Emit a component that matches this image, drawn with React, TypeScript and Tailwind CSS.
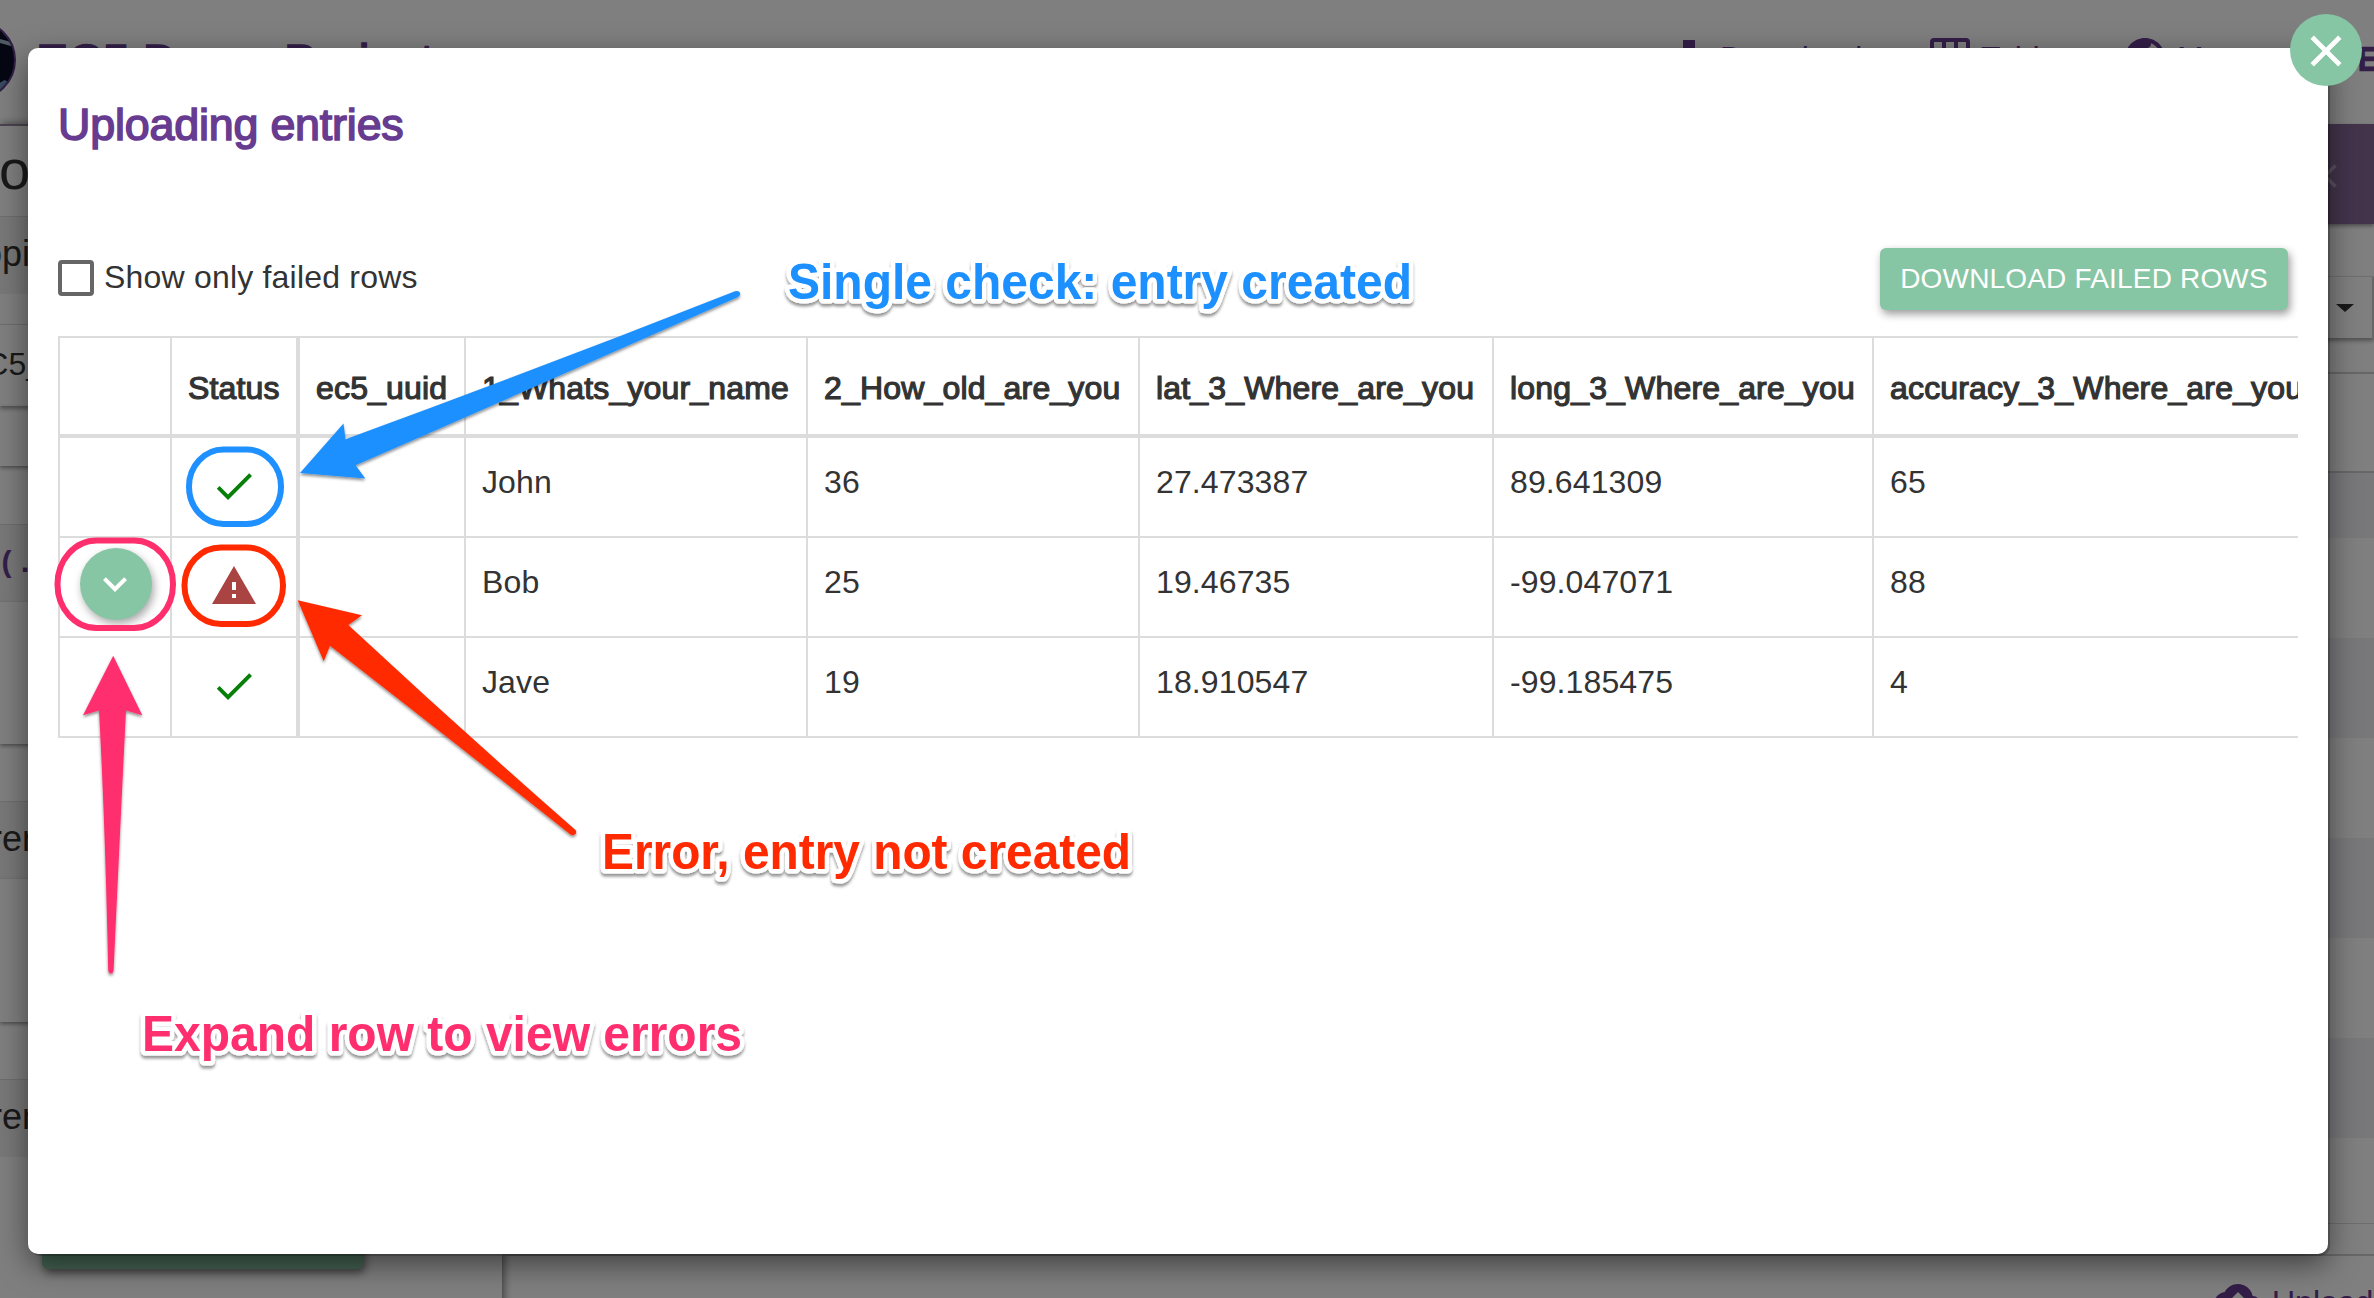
import React from "react";

const FONT = "font-['Liberation_Sans',Arial,sans-serif]";

function SidePanelTitle({ children, className }: { children: React.ReactNode; className: string }) {
  return (
    <div className="h-[78px] shrink-0 border-t border-[#dcdcdc] bg-[#f0f0f0]">
      <div className={`whitespace-nowrap ${className}`}>{children}</div>
    </div>
  );
}

function Backdrop() {
  return (
    <div className="flex h-[1298px] w-[2374px] flex-col overflow-hidden bg-white text-[#333]">
      <header className="flex h-[124px] shrink-0 items-start text-[32px] leading-[36px] text-[#673c90]">
        <div className="mt-[20px] -ml-[64px] h-[80px] w-[80px] shrink-0 overflow-hidden rounded-full border-2 border-[#673c90] bg-[#0a0f24]">
          <svg viewBox="0 0 80 80" className="h-full w-full">
            <path d="M50 16l30 8" stroke="#9fb4c4" strokeWidth="4" />
            <path d="M56 70l14-9 6 3-10 16z" fill="#6f93c0" />
          </svg>
        </div>
        <div className="mt-[34px] ml-[20px] text-[48px] leading-[55px] whitespace-nowrap [-webkit-text-stroke:1.6px_#673c90]">
          EC5 Demo Project
        </div>
        <div className="flex-1" />
        <div className="flex w-[709px] shrink-0 items-start">
          <svg viewBox="0 0 24 24" className="mt-[34px] h-[48px] w-[48px] shrink-0" fill="#673c90">
            <path d="M19 9h-4V3H9v6H5l7 7 7-7zM5 18v2h14v-2H5z" />
          </svg>
          <span className="mt-[40px] ml-[7px] w-[210px] shrink-0">Download</span>
          <svg viewBox="0 0 40 40" className="mt-[38px] h-[40px] w-[40px] shrink-0" fill="none" stroke="#673c90" strokeWidth="4">
            <rect x="2" y="2" width="36" height="36" rx="2" />
            <path d="M14 2v36M26 2v36M2 14h36M2 26h36" />
          </svg>
          <span className="mt-[40px] ml-[11px] w-[140px] shrink-0">Table</span>
          <svg viewBox="0 0 24 24" className="mt-[34px] h-[48px] w-[48px] shrink-0" fill="#673c90">
            <path d="M12 2C6.48 2 2 6.48 2 12s4.48 10 10 10 10-4.48 10-10S17.52 2 12 2zm-1 17.93c-3.95-.49-7-3.85-7-7.93 0-.62.08-1.21.21-1.79L9 15v1c0 1.1.9 2 2 2v1.93zm6.9-2.54c-.26-.81-1-1.39-1.9-1.39h-1v-3c0-.55-.45-1-1-1H8v-2h2c.55 0 1-.45 1-1V7h2c1.1 0 2-.9 2-2v-.41c2.93 1.19 5 4.06 5 7.41 0 2.08-.8 3.97-2.1 5.39z" />
          </svg>
          <span className="mt-[40px] ml-[8px] w-[181px] shrink-0">Map</span>
          <span className="mt-[41px] shrink-0 [-webkit-text-stroke:2.4px_#673c90]">E</span>
        </div>
      </header>

      <div className="flex flex-1">
        {/* Mapping sidebar */}
        <aside className="flex w-[502px] shrink-0 flex-col border-t-2 border-[#96869f] bg-white shadow-[2px_0_8px_rgba(0,0,0,0.5)]">
          <div className="h-[90px] shrink-0 text-[56px] leading-[64px]">
            <div className="mt-[12px] -ml-[1px]">o</div>
          </div>
          <SidePanelTitle className="mt-[16px] -ml-[18px] text-[36px] leading-[42px]">opi</SidePanelTitle>
          <div className="mt-[30px] h-[82px] shrink-0 border-t border-[#dcdcdc] shadow-[0_3px_4px_rgba(0,0,0,0.35)]">
            <div className="mt-[21px] -ml-[36px] text-[32px] leading-[36px]">EC5_uuid</div>
          </div>
          <div className="h-[60px] shrink-0 shadow-[0_2px_4px_rgba(0,0,0,0.4)]" />
          <div className="h-[58px] shrink-0" />
          <SidePanelTitle className="mt-[22px] ml-[-2px] font-['Liberation_Mono',monospace] text-[30px] leading-[34px] font-bold text-[#673c90]">
            (.
          </SidePanelTitle>
          <div className="h-[142px] shrink-0 shadow-[0_2px_4px_rgba(0,0,0,0.4)]" />
          <div className="h-[57px] shrink-0" />
          <SidePanelTitle className="mt-[16px] -ml-[10px] text-[36px] leading-[42px]">ren</SidePanelTitle>
          <div className="h-[143px] shrink-0 shadow-[0_2px_4px_rgba(0,0,0,0.4)]" />
          <div className="h-[57px] shrink-0" />
          <SidePanelTitle className="mt-[16px] -ml-[10px] text-[36px] leading-[42px]">ren</SidePanelTitle>
          <div className="mt-[50px] ml-[42px] h-[62px] w-[321px] shrink-0 rounded-[6px] bg-[#87c6a4] shadow-[2px_4px_8px_rgba(0,0,0,0.5)]" />
        </aside>

        {/* Entries preview */}
        <main className="flex flex-1 flex-col">
          <div className="flex h-[100px] shrink-0 items-center justify-end bg-[#876896] shadow-[0_2px_4px_rgba(0,0,0,0.4)]">
            <svg viewBox="0 0 14 24" className="mt-[4px] mr-[37px] h-[24px] w-[14px]" fill="none" stroke="#b5a5c0" strokeWidth="3.6">
              <path d="M12.5 1.5L2 12l10.500 10.500" />
            </svg>
          </div>
          <div className="mt-[52px] flex h-[62px] shrink-0 items-center justify-end border-t border-[#e0e0e0] shadow-[0_3px_4px_rgba(0,0,0,0.35)]">
            <div className="mr-[18px] h-0 w-0 border-x-[9px] border-t-[8px] border-x-transparent border-t-[#333]" />
            <div className="h-full w-[2px] bg-[#cfcfcf]" />
          </div>
          <div className="mt-[34px] h-[101px] shrink-0 border-y-2 border-[#cfcfcf] shadow-[0_3px_5px_rgba(0,0,0,0.2)]" />
          <div className="h-[65px] shrink-0 bg-[#f0f0f6]" />
          <div className="h-[100px] shrink-0" />
          <div className="h-[100px] shrink-0 bg-[#f0f0f6]" />
          <div className="h-[100px] shrink-0" />
          <div className="h-[100px] shrink-0 bg-[#f0f0f6]" />
          <div className="h-[100px] shrink-0" />
          <div className="h-[100px] shrink-0 bg-[#f0f0f6]" />
          <div className="h-[86px] shrink-0 border-b border-[#dcdcdc]" />
          <div className="h-[32px] shrink-0 border-b-2 border-[#cfcfcf]" />
          <div className="flex flex-1 items-start justify-end overflow-hidden text-[32px] leading-[36px] text-[#673c90]">
            <svg viewBox="0 0 24 24" className="mt-[20px] h-[48px] w-[48px] shrink-0" fill="#673c90">
              <path d="M19.350 10.040C18.670 6.590 15.640 4 12 4 9.110 4 6.600 5.640 5.350 8.040 2.340 8.360 0 10.910 0 14c0 3.310 2.690 6 6 6h13c2.760 0 5-2.240 5-5 0-2.640-2.050-4.780-4.650-4.960zM14 13v4h-4v-4H7l5-5 5 5h-3z" />
            </svg>
            <span className="mt-[28px] ml-[10px] w-[102px] shrink-0">Upload</span>
          </div>
        </main>
      </div>
    </div>
  );
}

const COLUMNS = ["", "Status", "ec5_uuid", "1_Whats_your_name", "2_How_old_are_you", "lat_3_Where_are_you", "long_3_Where_are_you", "accuracy_3_Where_are_you"];

const ROWS: { ok: boolean; cells: string[] }[] = [
  { ok: true, cells: ["", "John", "36", "27.473387", "89.641309", "65"] },
  { ok: false, cells: ["", "Bob", "25", "19.46735", "-99.047071", "88"] },
  { ok: true, cells: ["", "Jave", "19", "18.910547", "-99.185475", "4"] },
];

const GRID = "grid grid-cols-[112px_128px_166px_342px_332px_354px_380px_460px]";

function EntriesTable() {
  return (
    <div className="h-[402px] w-[2240px] overflow-hidden">
      <div className="w-[2274px] border-t-2 border-l-2 border-[#dcdcdc] text-[32px] leading-[36px]">
        <div className={`${GRID} h-[100px] border-b-4 border-[#dcdcdc]`}>
          {COLUMNS.map((name, i) => (
            <div
              key={i}
              className={`border-[#dcdcdc] pt-[32px] pl-[16px] tracking-[0.17px] whitespace-nowrap [-webkit-text-stroke:1.2px_#333] ${i === 1 ? "border-r-4" : "border-r-2"}`}
            >
              {name}
            </div>
          ))}
        </div>
        {ROWS.map((row, r) => (
          <div key={r} className={`${GRID} h-[100px] border-b-2 border-[#dcdcdc]`}>
            <div className="border-r-2 border-[#dcdcdc] pt-[10px] pl-[20px]">
              {!row.ok && (
                <button className="flex h-[72px] w-[72px] items-center justify-center rounded-full bg-[#87c6a4] shadow-[2px_4px_8px_rgba(0,0,0,0.35)]">
                  <svg viewBox="0 0 24 24" className="-ml-[2px] h-[48px] w-[48px]" fill="#fff">
                    <path d="M16.590 8.590L12 13.170 7.410 8.590 6 10l6 6 6-6z" />
                  </svg>
                </button>
              )}
            </div>
            <div className="border-r-4 border-[#dcdcdc] pt-[24px] pl-[38px]">
              <svg viewBox="0 0 24 24" className="h-[48px] w-[48px]">
                {row.ok ? (
                  <path fill="#078007" d="M9 16.200L4.800 12l-1.400 1.400L9 19 21 7l-1.400-1.400L9 16.200z" />
                ) : (
                  <path fill="#a94442" d="M1 21h22L12 2 1 21zm12-3h-2v-2h2v2zm0-4h-2v-4h2v4z" />
                )}
              </svg>
            </div>
            {row.cells.map((cell, c) => (
              <div key={c} className="border-r-2 border-[#dcdcdc] pt-[26px] pl-[16px] tracking-[0.12px]">
                {cell}
              </div>
            ))}
          </div>
        ))}
      </div>
    </div>
  );
}

function Callout({ x, y, width, color, children }: { x: number; y: number; width: number; color: string; children: string }) {
  return (
    <text
      x={x}
      y={y}
      textLength={width}
      lengthAdjust="spacingAndGlyphs"
      fill={color}
      stroke="#fff"
      strokeWidth="9"
      strokeLinejoin="round"
      paintOrder="stroke"
      fontSize="49.5"
      fontWeight="700"
      filter="url(#label-shadow)"
    >
      {children}
    </text>
  );
}

function Annotations() {
  return (
    <svg viewBox="0 0 2374 1298" className="pointer-events-none absolute top-0 left-0 h-[1298px] w-[2374px]">
      <defs>
        <filter id="label-shadow" x="-5%" y="-30%" width="110%" height="170%">
          <feDropShadow dx="0" dy="3" stdDeviation="1.500" floodColor="#000" floodOpacity="0.42" />
        </filter>
        <filter id="arrow-shadow" x="-10%" y="-10%" width="120%" height="120%">
          <feDropShadow dx="0" dy="2" stdDeviation="1.500" floodColor="#000" floodOpacity="0.45" />
        </filter>
      </defs>

      <g fill="none" strokeWidth="6">
        <rect x="189" y="449.500" width="92" height="74.500" rx="34.500" ry="37" stroke="#1e90ff" />
        <rect x="184.500" y="547.500" width="98.500" height="76.500" rx="36.500" ry="38" stroke="#ff2a00" />
        <rect x="57.500" y="540.500" width="115.500" height="87.500" rx="39" ry="43.500" stroke="#ff2f6e" />
      </g>

      <g filter="url(#arrow-shadow)">
        <path fill="#1e90ff" d="M300 473L343.500 423.500L345.500 439.300Q540 368 735 291.200Q740 290.500 740.200 294Q740 296 737 297.500Q548 381 355.600 465.300L365.300 478.500Z" />
        <path fill="#ff2a00" d="M297.700 600.200L362 615.300L348.300 625Q459 728 575.500 830Q577 832 575.500 834Q573.500 836 570.500 834.500Q454 742 330 645.700L323.700 661.300Z" />
        <path fill="#ff2f6e" d="M113.200 655.800L142.300 715.300L126 710.500Q121 810 113.600 970Q113 973.500 111 973.500Q108.500 973.500 108.200 970Q105 820 99 710.500L83 715.300Z" />
      </g>

      <Callout x={788} y={299} width={624} color="#1e90ff">Single check: entry created</Callout>
      <Callout x={602} y={869} width={529} color="#ff2a00">Error, entry not created</Callout>
      <Callout x={142} y={1051} width={600} color="#ff2f6e">Expand row to view errors</Callout>
    </svg>
  );
}

export default function App() {
  return (
    <div className={`relative h-[1298px] w-[2374px] overflow-hidden ${FONT}`}>
      <Backdrop />
      <div className="absolute inset-0 bg-black/50 px-[28px] pt-[48px]">
        <div className="h-[1206px] w-[2300px] rounded-[10px] bg-white px-[30px] text-[#333] shadow-[0_10px_30px_rgba(0,0,0,0.5),2px_2px_0_rgba(0,0,0,0.2)]">
          <h1 className="pt-[50px] pb-[1px] text-[44.8px] leading-[52px] tracking-[-0.18px] text-[#673c90] [-webkit-text-stroke:1.6px_#673c90]">Uploading entries</h1>
          <div className="mt-[97px] flex h-[62px] items-center justify-between pr-[10px]">
            <label className="-mt-[2px] flex items-center text-[32px] leading-[36px]">
              <span className="mr-[10px] h-[36px] w-[36px] rounded-[4px] border-4 border-[#666]" />
              <span className="-mt-[2px] tracking-[0.2px]">Show only failed rows</span>
            </label>
            <button className="h-[62px] w-[408px] rounded-[6px] bg-[#87c6a4] text-[28px] leading-[32px] tracking-[0.18px] whitespace-nowrap text-white shadow-[2px_4px_8px_rgba(0,0,0,0.4)]">
              DOWNLOAD FAILED ROWS
            </button>
          </div>
          <div className="mt-[26px]">
            <EntriesTable />
          </div>
        </div>
      </div>
      <button className="absolute top-[14px] left-[2290px] flex h-[72px] w-[72px] items-center justify-center rounded-full bg-[#87c6a4]">
        <svg viewBox="0 0 24 24" className="mt-[2px] h-[52px] w-[52px]" fill="#fff" stroke="#fff" strokeWidth="0.3">
          <path d="M19 6.410L17.590 5 12 10.590 6.410 5 5 6.410 10.590 12 5 17.590 6.410 19 12 13.410 17.590 19 19 17.590 13.410 12z" />
        </svg>
      </button>
      <Annotations />
    </div>
  );
}
